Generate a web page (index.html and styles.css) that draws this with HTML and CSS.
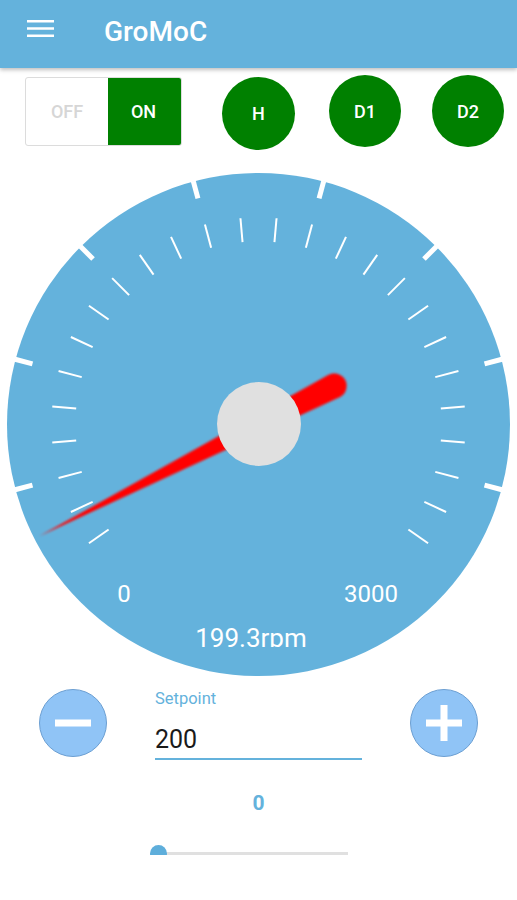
FILE: index.html
```html
<!DOCTYPE html>
<html>
<head>
    <title>GroMoC</title>
    <link rel="stylesheet" href="styles.css">
</head>
<body>
    <header class="app-bar">
        <svg class="menu-icon" width="27" height="17" viewBox="0 0 27 17">
            <line x1="0" y1="1.25" x2="27" y2="1.25" />
            <line x1="0" y1="8.5" x2="27" y2="8.5" />
            <line x1="0" y1="15.75" x2="27" y2="15.75" />
        </svg>
        <h1 class="app-title">GroMoC</h1>
    </header>

    <div class="switch-row">
        <div class="toggle">
            <span class="toggle-off">OFF</span>
            <span class="toggle-on">ON</span>
        </div>
        <button class="round-btn btn-h">H</button>
        <button class="round-btn btn-d1">D1</button>
        <button class="round-btn btn-d2">D2</button>
    </div>

    <div class="gauge">
        <svg width="503" height="503" viewBox="0 0 503 503">
            <defs>
                <filter id="soft" x="-20%" y="-20%" width="140%" height="140%">
                    <feGaussianBlur stdDeviation="1.2" />
                </filter>
                <filter id="softer" x="-10%" y="-10%" width="120%" height="120%">
                    <feGaussianBlur stdDeviation="0.7" />
                </filter>
                <clipPath id="readout-clip">
                    <rect x="0" y="0" width="503" height="474" />
                </clipPath>
            </defs>
            <circle class="dial" cx="251.5" cy="251.5" r="251.5" />
            <g transform="translate(251.5 251.5)">
                <!-- minor ticks every 10 degrees -->
                <g class="tick-minor">
                    <line x1="0" y1="-207" x2="0" y2="-183" transform="rotate(-125)" />
                    <line x1="0" y1="-207" x2="0" y2="-183" transform="rotate(-115)" />
                    <line x1="0" y1="-207" x2="0" y2="-183" transform="rotate(-105)" />
                    <line x1="0" y1="-207" x2="0" y2="-183" transform="rotate(-95)" />
                    <line x1="0" y1="-207" x2="0" y2="-183" transform="rotate(-85)" />
                    <line x1="0" y1="-207" x2="0" y2="-183" transform="rotate(-75)" />
                    <line x1="0" y1="-207" x2="0" y2="-183" transform="rotate(-65)" />
                    <line x1="0" y1="-207" x2="0" y2="-183" transform="rotate(-55)" />
                    <line x1="0" y1="-207" x2="0" y2="-183" transform="rotate(-45)" />
                    <line x1="0" y1="-207" x2="0" y2="-183" transform="rotate(-35)" />
                    <line x1="0" y1="-207" x2="0" y2="-183" transform="rotate(-25)" />
                    <line x1="0" y1="-207" x2="0" y2="-183" transform="rotate(-15)" />
                    <line x1="0" y1="-207" x2="0" y2="-183" transform="rotate(-5)" />
                    <line x1="0" y1="-207" x2="0" y2="-183" transform="rotate(5)" />
                    <line x1="0" y1="-207" x2="0" y2="-183" transform="rotate(15)" />
                    <line x1="0" y1="-207" x2="0" y2="-183" transform="rotate(25)" />
                    <line x1="0" y1="-207" x2="0" y2="-183" transform="rotate(35)" />
                    <line x1="0" y1="-207" x2="0" y2="-183" transform="rotate(45)" />
                    <line x1="0" y1="-207" x2="0" y2="-183" transform="rotate(55)" />
                    <line x1="0" y1="-207" x2="0" y2="-183" transform="rotate(65)" />
                    <line x1="0" y1="-207" x2="0" y2="-183" transform="rotate(75)" />
                    <line x1="0" y1="-207" x2="0" y2="-183" transform="rotate(85)" />
                    <line x1="0" y1="-207" x2="0" y2="-183" transform="rotate(95)" />
                    <line x1="0" y1="-207" x2="0" y2="-183" transform="rotate(105)" />
                    <line x1="0" y1="-207" x2="0" y2="-183" transform="rotate(115)" />
                    <line x1="0" y1="-207" x2="0" y2="-183" transform="rotate(125)" />
                </g>
                <!-- major ticks on the rim -->
                <g class="tick-major">
                    <line x1="0" y1="-252" x2="0" y2="-234" transform="rotate(-105)" />
                    <line x1="0" y1="-252" x2="0" y2="-234" transform="rotate(-75)" />
                    <line x1="0" y1="-252" x2="0" y2="-234" transform="rotate(-45)" />
                    <line x1="0" y1="-252" x2="0" y2="-234" transform="rotate(-15)" />
                    <line x1="0" y1="-252" x2="0" y2="-234" transform="rotate(15)" />
                    <line x1="0" y1="-252" x2="0" y2="-234" transform="rotate(45)" />
                    <line x1="0" y1="-252" x2="0" y2="-234" transform="rotate(75)" />
                    <line x1="0" y1="-252" x2="0" y2="-234" transform="rotate(105)" />
                </g>
                <!-- 199.3 of 3000 over a 270 degree sweep -->
                <path class="needle" d="M0,-246 L12.5,85 A12.5,12.5 0 0 1 -12.5,85 Z" transform="rotate(-117)" filter="url(#soft)" />
                <circle class="hub" cx="0.5" cy="-0.5" r="42" filter="url(#softer)" />
            </g>
            <text class="dial-label" x="117" y="429">0</text>
            <text class="dial-label" x="364" y="429">3000</text>
            <text class="dial-readout" x="244" y="474" clip-path="url(#readout-clip)">199.3rpm</text>
        </svg>
    </div>

    <div class="controls">
        <button class="step-btn">
            <svg width="36" height="36" viewBox="0 0 36 36"><rect x="0" y="14.5" width="36" height="7" /></svg>
        </button>
        <div class="setpoint">
            <label for="setpoint" class="setpoint-label">Setpoint</label>
            <div id="setpoint" class="setpoint-value">200</div>
        </div>
        <button class="step-btn">
            <svg width="36" height="36" viewBox="0 0 36 36"><rect x="0" y="14.5" width="36" height="7" /><rect x="14.5" y="0" width="7" height="36" /></svg>
        </button>
    </div>

    <p class="slider-value">0</p>
    <div class="slider">
        <div class="slider-thumb"></div>
    </div>
</body>
</html>
```

FILE: styles.css
```css
body {
    margin: 0;
    padding: 0;
    font-family: Roboto, "Noto Sans", Arial, sans-serif;
    background-color: #fff;
    width: 517px;
    overflow: hidden;
}
.app-bar {
    position: relative;
    z-index: 1;
    display: flex;
    align-items: flex-start;
    height: 68px;
    padding-left: 27px;
    background-color: #64b2dc;
    box-shadow: 0 2px 4px rgba(0, 0, 0, 0.25);
}
.menu-icon {
    margin-top: 20px;
}
.menu-icon line {
    stroke: #fff;
    stroke-width: 2.5;
}
.app-title {
    margin: 16px 0 0 50px;
    font-size: 28px;
    line-height: 32px;
    font-weight: 500;
    color: #fff;
}
.switch-row {
    display: flex;
    align-items: flex-start;
    padding: 7px 0 0 25px;
}
.toggle {
    display: flex;
    margin-top: 2px;
    width: 157px;
    height: 69px;
    border: 1px solid #dcdcdc;
    border-radius: 3px;
    box-sizing: border-box;
    overflow: hidden;
    font-size: 18px;
    font-weight: 500;
}
.toggle-off, .toggle-on {
    display: flex;
    align-items: center;
    justify-content: center;
}
.toggle-off {
    width: 82px;
    color: #d6d6d6;
}
.toggle-on {
    flex: 1;
    background-color: #008000;
    color: #fff;
    padding-right: 2px;
}
.round-btn {
    width: 72px;
    height: 72px;
    border: none;
    border-radius: 50%;
    background-color: #008000;
    color: #fff;
    font-family: Roboto, "Noto Sans", Arial, sans-serif;
    font-size: 18px;
    font-weight: 500;
    padding: 0;
}
.btn-h {
    margin: 2px 0 0 40px;
    width: 73px;
    height: 73px;
}
.btn-d1 {
    margin-left: 34px;
}
.btn-d2 {
    margin-left: 31px;
}
.gauge {
    margin: 23px 0 0 7px;
    height: 503px;
}
.gauge svg {
    display: block;
}
.dial {
    fill: #64b2dc;
}
.tick-minor line {
    stroke: #fff;
    stroke-width: 2;
}
.tick-major line {
    stroke: #fff;
    stroke-width: 5;
}
.needle {
    fill: #ff0000;
}
.hub {
    fill: #e0e0e0;
}
.dial-label {
    fill: #fff;
    font-family: Roboto, "Noto Sans", Arial, sans-serif;
    font-size: 24px;
    text-anchor: middle;
}
.dial-readout {
    fill: #fff;
    font-family: Roboto, "Noto Sans", Arial, sans-serif;
    font-size: 26px;
    text-anchor: middle;
}
.controls {
    display: flex;
    align-items: flex-start;
    gap: 48px;
    margin-top: 13px;
    padding-left: 39px;
}
.step-btn {
    display: flex;
    align-items: center;
    justify-content: center;
    width: 68px;
    height: 68px;
    padding: 0;
    border: 1.5px solid #6c9fd2;
    border-radius: 50%;
    background-color: #90c4f6;
}
.step-btn svg rect {
    fill: #fff;
}
.setpoint {
    display: flex;
    flex-direction: column;
    width: 207px;
}
.setpoint-label {
    font-size: 16.5px;
    line-height: 20px;
    color: #64b2dc;
}
.setpoint-value {
    margin-top: 16px;
    padding-bottom: 3px;
    font-size: 25px;
    line-height: 30px;
    color: #1a1a1a;
    border-bottom: 2px solid #64b2dc;
}
.slider-value {
    margin: 31px 0 0;
    text-align: center;
    font-size: 21px;
    line-height: 24px;
    font-weight: 700;
    color: #64b2dc;
}
.slider {
    position: relative;
    margin: 37px 0 0 158px;
    width: 190px;
    height: 3px;
    background-color: #e0e0e0;
}
.slider-thumb {
    position: absolute;
    left: -8.5px;
    top: -7px;
    width: 17px;
    height: 17px;
    border-radius: 50%;
    background-color: #5eaedb;
}
```
